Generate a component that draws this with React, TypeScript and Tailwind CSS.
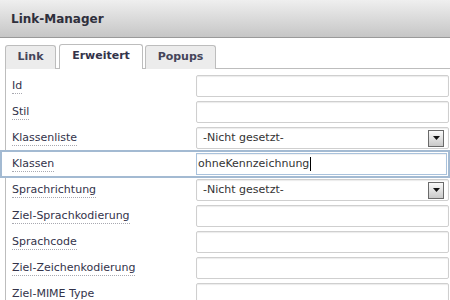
import React from 'react';

type Row = { label: string; kind: 'text' | 'select' | 'focus'; value?: string };

const rows: Row[] = [
  { label: 'Id', kind: 'text' },
  { label: 'Stil', kind: 'text' },
  { label: 'Klassenliste', kind: 'select', value: '-Nicht gesetzt-' },
  { label: 'Klassen', kind: 'focus', value: 'ohneKennzeichnung' },
  { label: 'Sprachrichtung', kind: 'select', value: '-Nicht gesetzt-' },
  { label: 'Ziel-Sprachkodierung', kind: 'text' },
  { label: 'Sprachcode', kind: 'text' },
  { label: 'Ziel-Zeichenkodierung', kind: 'text' },
  { label: 'Ziel-MIME Type', kind: 'text' },
];

const Label = ({ text }: { text: string }) => (
  <div className="w-[184px] shrink-0">
    <span className="border-b border-dotted border-[#a8a8b0] pb-[1px] leading-[13px] text-[#33334a]">{text}</span>
  </div>
);

const SelectBox = ({ value }: { value?: string }) => (
  <div className="flex h-[22px] w-[253px] items-center rounded-[2px] border border-[#cfcfcf] bg-white pl-[6px] shadow-[inset_0_1px_1px_rgba(0,0,0,0.08)]">
    <span className="flex-1 text-[#333]">{value}</span>
    <div className="mr-[4px] flex h-[17px] w-[16px] items-center justify-center border border-[#6a6a6a] bg-gradient-to-b from-[#fafafa] to-[#c9c9c9]">
      <svg width="7" height="4" viewBox="0 0 7 4">
        <path d="M0 0h7L3.5 4z" fill="#111" />
      </svg>
    </div>
  </div>
);

const TextBox = () => (
  <div className="h-[22px] w-[253px] rounded-[2px] border border-[#cfcfcf] bg-white shadow-[inset_0_1px_1px_rgba(0,0,0,0.08)]" />
);

export default function App() {
  return (
    <div
      className="h-[300px] w-[450px] overflow-hidden bg-white text-[11px]"
      style={{ fontFamily: '"DejaVu Sans", Verdana, sans-serif' }}
    >
      {/* Header */}
      <div className="flex h-[38px] items-center border-b border-[#9a9a9a] bg-gradient-to-b from-[#efefef] to-[#c6c6c6] pl-[11px]">
        <span className="text-[12px] font-bold text-[#2f2f3c]">Link-Manager</span>
      </div>

      {/* Tabs */}
      <div className="mt-[6px] flex items-end pl-[5px]">
        <div className="flex h-[24px] w-[51px] items-center justify-center rounded-t-[3px] border border-b-0 border-[#bdbdbd] bg-[#ececec] font-bold text-[#45455a]">
          Link
        </div>
        <div className="relative z-10 ml-[3px] flex h-[25px] w-[84px] items-center justify-center rounded-t-[3px] border border-b-0 border-[#bdbdbd] bg-white pb-[1px] font-bold text-[#33334a]">
          Erweitert
        </div>
        <div className="ml-[2px] flex h-[24px] w-[71px] items-center justify-center rounded-t-[3px] border border-b-0 border-[#bdbdbd] bg-[#ececec] font-bold text-[#45455a]">
          Popups
        </div>
      </div>

      {/* Panel */}
      <div className="-mt-[1px] ml-[5px] w-[470px] border-l border-t border-[#bdbdbd] pt-[4px]">
        {rows.map((r) =>
          r.kind === 'focus' ? (
            <div
              key={r.label}
              className="relative z-10 -my-[1px] -ml-[6px] flex h-[28px] w-[450px] items-center border-2 border-[#a3bad2] bg-white pl-[10px]"
            >
              <Label text={r.label} />
              <div className="flex h-[22px] w-[251px] items-center border border-[#a9c2dc] bg-white pl-[1px] text-[#333] shadow-[inset_0_1px_1px_rgba(0,0,0,0.06)]">
                {r.value}
                <span className="ml-[1px] inline-block h-[14px] w-[1px] bg-black" />
              </div>
            </div>
          ) : (
            <div key={r.label} className="flex h-[26px] items-center pl-[6px]">
              <Label text={r.label} />
              {r.kind === 'select' ? <SelectBox value={r.value} /> : <TextBox />}
            </div>
          )
        )}
      </div>
    </div>
  );
}
